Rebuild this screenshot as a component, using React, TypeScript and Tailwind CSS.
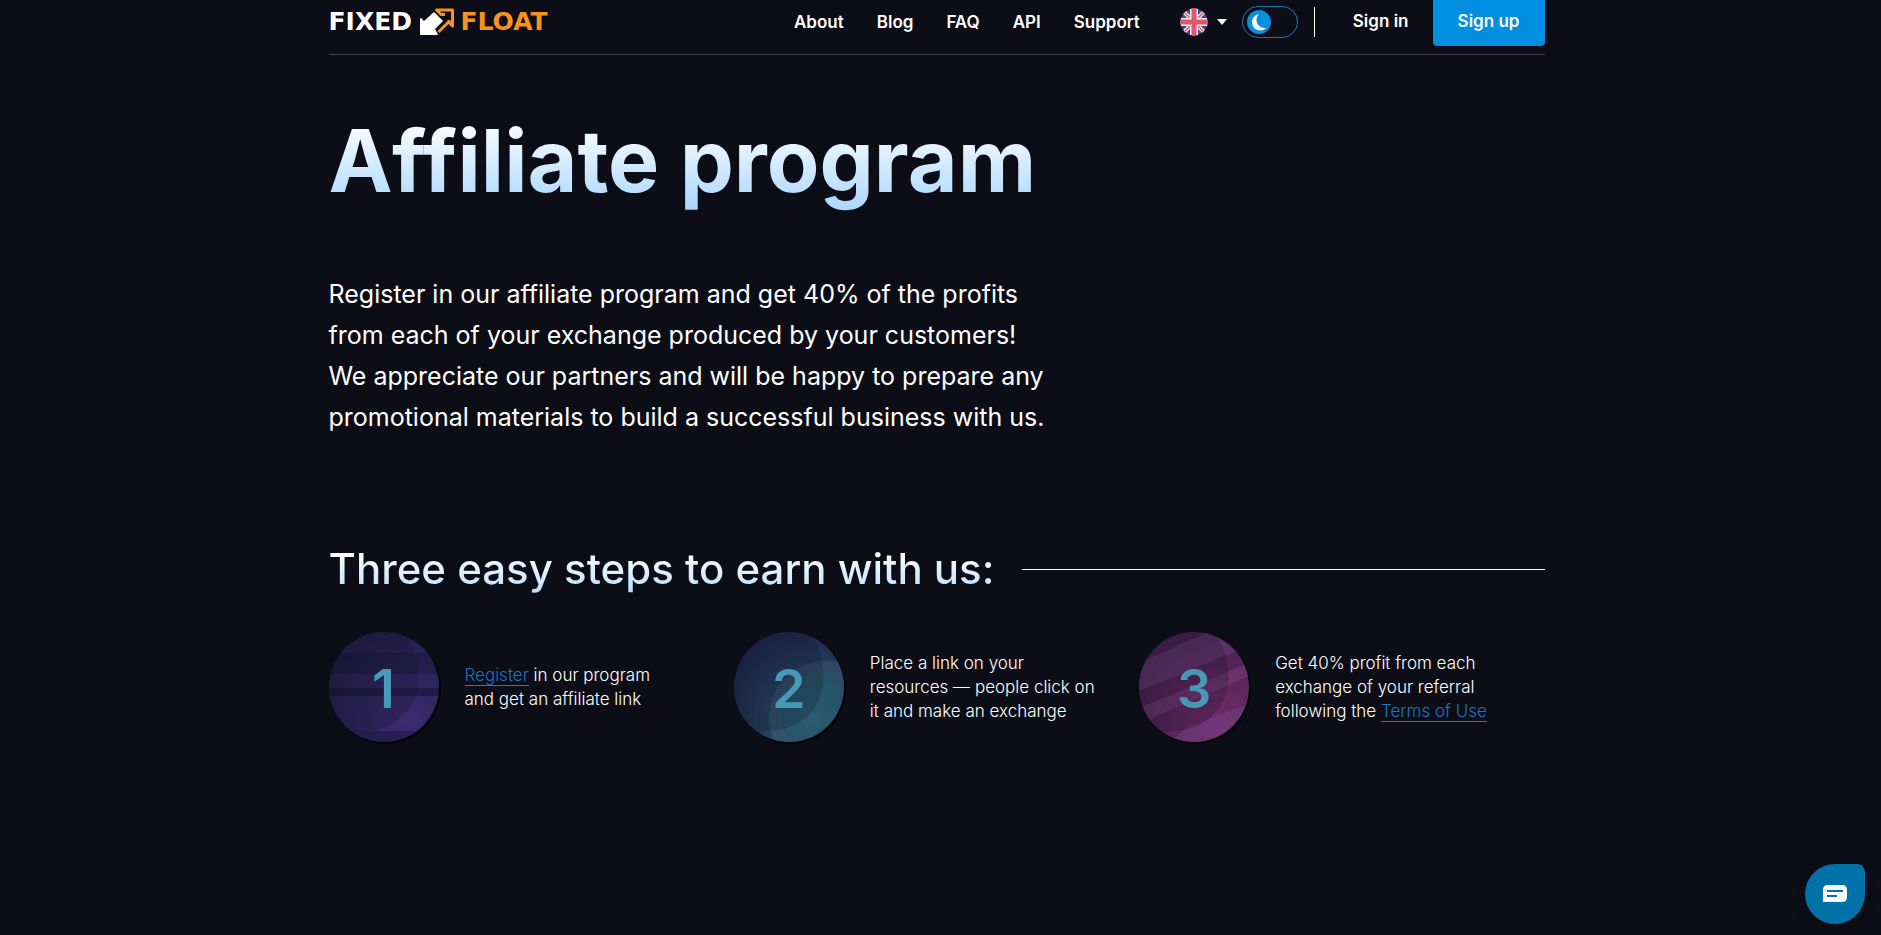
import { useState } from 'react'
import type { ReactNode } from 'react'

type Step = {
  id: number
  planet: ReactNode
  text: ReactNode
}

const navLinks = ['About', 'Blog', 'FAQ', 'API', 'Support']

const linkClass = 'border-b border-[#1f7fbd] text-[#1f74c4] hover:border-transparent'

function Logo() {
  return (
    <a href="#" aria-label="FixedFloat" className="flex items-center font-['DejaVu_Sans',sans-serif] text-[25px] leading-8 font-bold">
      <span className="w-22 text-white">FIXED</span>
      <svg width="40" height="32" viewBox="0 0 40 32" fill="none" aria-hidden="true">
        <path d="M17 6.500 L25.500 15 L17.500 23 L20.500 28.500 H3.500 V12 L7 15.500 Z" fill="#fff" stroke="#fff" strokeLinejoin="round" />
        <path d="M28 8.500 H24 L19.500 4 H35.500 V20 L32 16 V14 M32 15.500 L21.500 26" stroke="#f7931a" strokeWidth="3" strokeLinejoin="round" />
      </svg>
      <span className="ml-1 text-[#f7931a]">FLOAT</span>
    </a>
  )
}

function Flag() {
  return (
    <svg width="28" height="28" viewBox="0 0 28 28" aria-hidden="true">
      <clipPath id="flag">
        <circle cx="14" cy="14" r="13.500" />
      </clipPath>
      <g clipPath="url(#flag)">
        <rect width="28" height="28" fill="#474a8a" />
        <path d="M0 0 L28 28 M28 0 L0 28" stroke="#f3eef3" strokeWidth="4" />
        <path d="M0 0 L28 28 M28 0 L0 28" stroke="#e0596b" strokeWidth="1.500" />
        <path d="M14 0 V28 M0 14 H28" stroke="#f3eef3" strokeWidth="8" />
        <path d="M14 0 V28 M0 14 H28" stroke="#e0596b" strokeWidth="5" />
      </g>
    </svg>
  )
}

function Planet({ id, from, to, children }: { id: number; from: string; to: string; children: ReactNode }) {
  return (
    <div className="relative flex size-[110px] shrink-0 items-center justify-center rounded-full shadow-[2px_2px_0_#020207]">
      <svg className="absolute inset-0" width="110" height="110" viewBox="0 0 110 110" aria-hidden="true">
        <defs>
          <clipPath id={`clip${id}`}>
            <circle cx="55" cy="55" r="55" />
          </clipPath>
          <radialGradient id={`fill${id}`} cx="0.7" cy="0.8" r="0.8">
            <stop offset="0" stopColor={to} />
            <stop offset="1" stopColor={from} />
          </radialGradient>
        </defs>
        <g clipPath={`url(#clip${id})`}>
          <rect width="110" height="110" fill={`url(#fill${id})`} />
          {children}
          <path d="M73 0 C94 20 95 62 76 81 C64 94 50 99 31 99 L0 110 V0 Z" fill="#0b0b16" opacity="0.2" />
        </g>
      </svg>
      <span className="relative pt-1 text-[54px] leading-none font-semibold text-[#4799b8]">{id}</span>
    </div>
  )
}

const steps: Step[] = [
  {
    id: 1,
    planet: (
      <Planet id={1} from="#261f4d" to="#392c70">
        <rect y="21" width="110" height="21" fill="#0d0a25" opacity="0.25" />
        <rect y="56" width="110" height="8" fill="#0d0a25" opacity="0.4" />
        <rect y="99" width="110" height="11" fill="#0d0a25" opacity="0.3" />
      </Planet>
    ),
    text: (
      <>
        <a href="#register" className={linkClass}>Register</a> in our program<br />
        and get an affiliate link
      </>
    ),
  },
  {
    id: 2,
    planet: (
      <Planet id={2} from="#1f294f" to="#2a5a72">
        <path d="M110 31 C88 24 64 32 49 48 C36 61 31 85 40 110 H110 Z" fill="#8aa2ad" opacity="0.13" />
        <path d="M110 43 C92 37 75 40 61 51 C44 65 41 90 57 110 H110 Z" fill="#1d5468" opacity="0.5" />
      </Planet>
    ),
    text: (
      <>
        Place a link on your<br />
        resources — people click on<br />
        it and make an exchange
      </>
    ),
  },
  {
    id: 3,
    planet: (
      <Planet id={3} from="#46204f" to="#702c69">
        <path d="M0 31 L78 -4 L110 8 V14 L0 59 Z" fill="#8a5fa8" opacity="0.25" />
        <path d="M0 76 L110 31 V44 L8 88 Z" fill="#9a5ba8" opacity="0.25" />
        <path d="M30 110 L50 94 L110 72 V110 Z" fill="#7d4fa0" opacity="0.3" />
      </Planet>
    ),
    text: (
      <>
        Get 40% profit from each<br />
        exchange of your referral<br />
        following the <a href="#terms" className={linkClass}>Terms of Use</a>
      </>
    ),
  },
]

export default function App() {
  const [dark, setDark] = useState(true)

  return (
    <div className="min-h-screen bg-[#0c0d16] px-4 pr-6 font-['Inter',sans-serif] text-white">
      <div className="mx-auto max-w-[1216px]">
        <header className="flex h-[55px] items-start border-b border-[#3d3e46]">
          <div className="pt-[6px]">
            <Logo />
          </div>

          <nav className="ml-auto flex gap-[33px] pt-[10px] text-[17px] leading-6 font-semibold">
            {navLinks.map((link) => (
              <a key={link} href={`#${link.toLowerCase()}`} className="hover:text-[#0090e0]">
                {link}
              </a>
            ))}
          </nav>

          <button type="button" aria-label="Language" className="ml-10 flex items-center gap-2 pt-2">
            <Flag />
            <svg width="12" height="8" viewBox="0 0 12 8" aria-hidden="true">
              <path d="M1 1 H11 L6 7 Z" fill="#fff" />
            </svg>
          </button>

          <button
            type="button"
            role="switch"
            aria-checked={dark}
            aria-label="Dark theme"
            onClick={() => setDark(!dark)}
            className="mt-[6px] ml-[14px] flex h-8 w-14 items-center rounded-full border border-[#1678b8] px-1"
          >
            <svg width="24" height="24" viewBox="0 0 24 24" aria-hidden="true">
              <circle cx="12" cy="12" r="12" fill="#0690de" />
              <path d="M12 4 C8 5 5 8 5 12 C5 17 9 20.500 13.500 20.500 C16 20.500 18 19.500 19 18 C13.500 18.500 9.500 14.500 9.500 10 C9.500 7.500 10.500 5.500 12 4 Z" fill="#fff" />
            </svg>
          </button>

          <div className="mt-[7px] ml-4 h-[30px] w-px bg-white" />

          <a href="#signin" className="ml-[38px] pt-[9px] text-[17px] leading-6 font-semibold">
            Sign in
          </a>
          <a
            href="#signup"
            className="ml-6 flex h-[46px] w-28 justify-center rounded-b bg-[#008fe0] pt-[9px] text-[17px] leading-6 font-semibold"
          >
            Sign up
          </a>
        </header>

        <main>
          <h1 className="w-fit bg-linear-to-b from-white from-40% to-[#a9d6ff] bg-clip-text pt-[56px] text-[86px] leading-[100px] font-bold text-transparent">
            Affiliate program
          </h1>

          <p className="mt-[63px] text-[25px] leading-[41px]">
            Register in our affiliate program and get 40% of the profits<br />
            from each of your exchange produced by your customers!<br />
            We appreciate our partners and will be happy to prepare any<br />
            promotional materials to build a successful business with us.
          </p>

          <div className="mt-[103px] flex items-center gap-7">
            <h2 className="bg-linear-to-b from-white from-20% to-[#b5dbfd] bg-clip-text text-[42px] leading-[56px] font-medium text-transparent">
              Three easy steps to earn with us:
            </h2>
            <div className="h-px flex-1 bg-white" />
          </div>

          <ol className="mt-[35px] grid grid-cols-3">
            {steps.map((step) => (
              <li key={step.id} className="flex items-center gap-[26px]">
                {step.planet}
                <p className="text-[17px] leading-6 font-light">{step.text}</p>
              </li>
            ))}
          </ol>
        </main>
      </div>

      <button
        type="button"
        aria-label="Open chat"
        className="fixed right-4 bottom-[11px] flex size-[60px] items-center justify-center rounded-[30px] rounded-tr-lg bg-[#0072a8] shadow-lg"
      >
        <svg width="24" height="18" viewBox="0 0 24 18" aria-hidden="true">
          <path d="M5 0 H19 Q24 0 24 5 V12 Q24 17 19 17 H0 V5 Q0 0 5 0 Z" fill="#fff" />
          <path d="M4 6 H20 M4 11 H14" stroke="#0072a8" strokeWidth="2" />
        </svg>
      </button>
    </div>
  )
}
